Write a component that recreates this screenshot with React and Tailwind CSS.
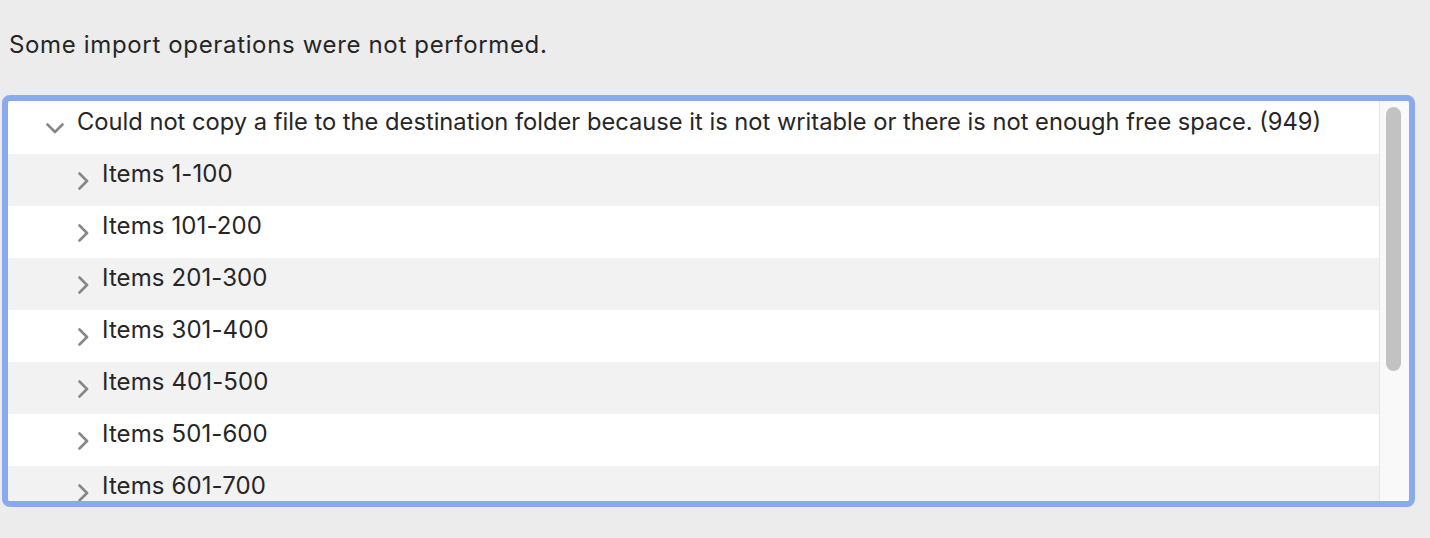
import React from 'react'

const items = ['1-100', '101-200', '201-300', '301-400', '401-500', '501-600', '601-700']

function ChevronDown() {
  return (
    <svg width="18" height="11" viewBox="0 0 18 11" className="shrink-0">
      <path d="M1.5 1.5 L9 9 L16.5 1.5" fill="none" stroke="#878787" strokeWidth="2.6" strokeLinecap="round" strokeLinejoin="round" />
    </svg>
  )
}

function ChevronRight() {
  return (
    <svg width="11" height="18" viewBox="0 0 11 18" className="shrink-0">
      <path d="M1.5 1.5 L9 9 L1.5 16.5" fill="none" stroke="#878787" strokeWidth="2.6" strokeLinecap="round" strokeLinejoin="round" />
    </svg>
  )
}

export default function App() {
  return (
    <div className="w-[1430px] h-[538px] bg-[#ececec] overflow-hidden font-['Inter','Liberation_Sans',sans-serif] text-[#262626]">
      <div className="pt-[30px] pl-[9px] text-[24px] leading-[30px] tracking-[0.65px]">
        Some import operations were not performed.
      </div>

      {/* outline view */}
      <div className="mt-[35px] ml-[2px] w-[1413px] h-[412px] border-[6px] border-[#89abee] rounded-[8px] bg-white flex overflow-hidden">
        <div className="flex-1 overflow-hidden">
          <div className="h-[53px] flex items-center pl-[38px] gap-[13px]">
            <span className="mt-[2px]"><ChevronDown /></span>
            <span className="text-[23.7px] leading-[30px] mb-[11px]">
              Could not copy a file to the destination folder because it is not writable or there is not enough free space. (949)
            </span>
          </div>
          {items.map((r, i) => (
            <div
              key={r}
              className={`h-[52px] flex items-center pl-[70px] gap-[13px] ${i % 2 === 0 ? 'bg-[#f2f2f2]' : 'bg-white'}`}
            >
              <span className="mt-[1px]"><ChevronRight /></span>
              <span className="text-[24px] leading-[30px] tracking-[0.1px] mb-[12px]">Items {r}</span>
            </div>
          ))}
        </div>

        {/* scrollbar */}
        <div className="w-[30px] shrink-0 bg-[#f9f9f9] border-l border-[#e6e6e6] pt-[6px] pl-[6px]">
          <div className="w-[15px] h-[264px] rounded-full bg-[#c2c2c2]" />
        </div>
      </div>
    </div>
  )
}
